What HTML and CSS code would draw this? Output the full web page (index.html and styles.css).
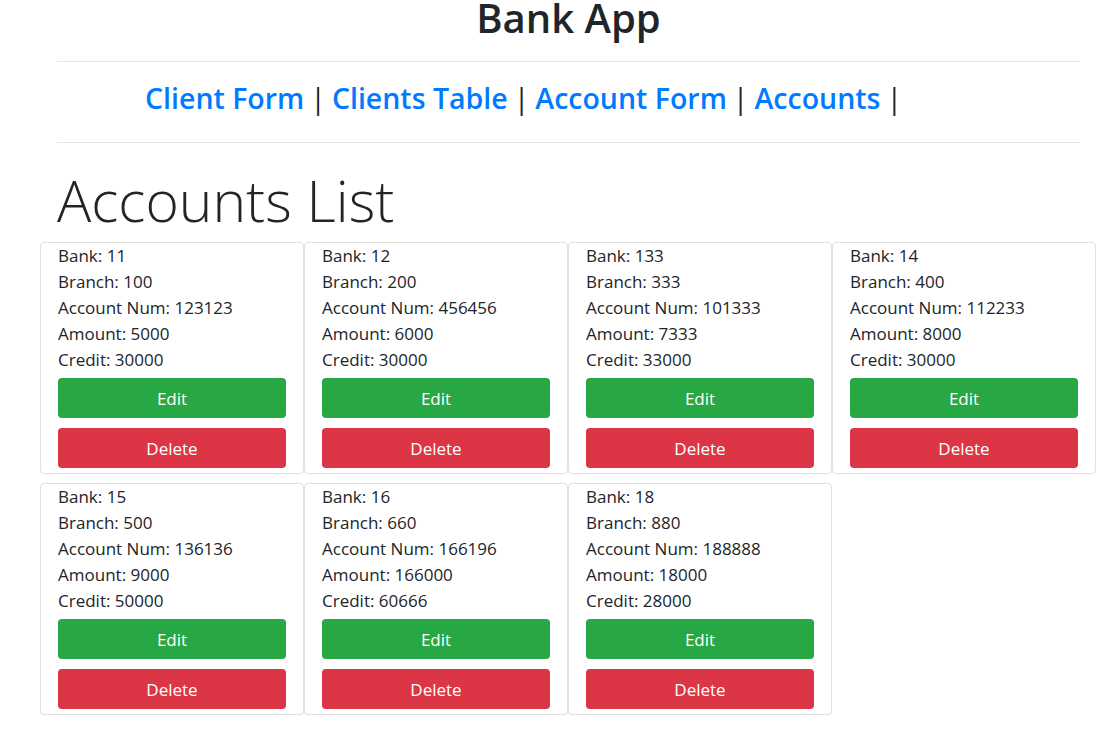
FILE: index.html
```html
<!DOCTYPE html>
<html lang="en">
<head>
<meta charset="utf-8">
<title>Bank App</title>
<link rel="stylesheet" href="styles.css">
</head>
<body>
<header class="header">
  <h1 class="app-title">Bank App</h1>
  <hr class="rule">
  <nav class="nav">
    <a class="nav-link" href="#">Client Form</a><span class="sep">|</span><a class="nav-link" href="#">Clients Table</a><span class="sep">|</span><a class="nav-link" href="#">Account Form</a><span class="sep">|</span><a class="nav-link" href="#">Accounts</a><span class="sep">|</span>
  </nav>
  <hr class="rule">
</header>
<main>
  <h2 class="page-title">Accounts List</h2>
  <div class="cards">
    <div class="card"><div class="line">Bank: 11</div><div class="line">Branch: 100</div><div class="line">Account Num: 123123</div><div class="line">Amount: 5000</div><div class="line">Credit: 30000</div><button class="btn btn-edit">Edit</button><button class="btn btn-delete">Delete</button></div>
    <div class="card"><div class="line">Bank: 12</div><div class="line">Branch: 200</div><div class="line">Account Num: 456456</div><div class="line">Amount: 6000</div><div class="line">Credit: 30000</div><button class="btn btn-edit">Edit</button><button class="btn btn-delete">Delete</button></div>
    <div class="card"><div class="line">Bank: 133</div><div class="line">Branch: 333</div><div class="line">Account Num: 101333</div><div class="line">Amount: 7333</div><div class="line">Credit: 33000</div><button class="btn btn-edit">Edit</button><button class="btn btn-delete">Delete</button></div>
    <div class="card"><div class="line">Bank: 14</div><div class="line">Branch: 400</div><div class="line">Account Num: 112233</div><div class="line">Amount: 8000</div><div class="line">Credit: 30000</div><button class="btn btn-edit">Edit</button><button class="btn btn-delete">Delete</button></div>
    <div class="card"><div class="line">Bank: 15</div><div class="line">Branch: 500</div><div class="line">Account Num: 136136</div><div class="line">Amount: 9000</div><div class="line">Credit: 50000</div><button class="btn btn-edit">Edit</button><button class="btn btn-delete">Delete</button></div>
    <div class="card"><div class="line">Bank: 16</div><div class="line">Branch: 660</div><div class="line">Account Num: 166196</div><div class="line">Amount: 166000</div><div class="line">Credit: 60666</div><button class="btn btn-edit">Edit</button><button class="btn btn-delete">Delete</button></div>
    <div class="card"><div class="line">Bank: 18</div><div class="line">Branch: 880</div><div class="line">Account Num: 188888</div><div class="line">Amount: 18000</div><div class="line">Credit: 28000</div><button class="btn btn-edit">Edit</button><button class="btn btn-delete">Delete</button></div>
  </div>
</main>
</body>
</html>
```
FILE: styles.css
```css
* { box-sizing: border-box; }
html, body {
  margin: 0;
  padding: 0;
  background: #fff;
  color: #212529;
  font-family: "Open Sans", "Noto Sans", sans-serif;
  font-size: 17px;
}
.header {
  display: flex;
  flex-direction: column;
  margin: 0 28px 0 57px;
}
.app-title {
  margin: 0;
  text-align: center;
  font-size: 40px;
  font-weight: 600;
  line-height: 36px;
  height: 36px;
}
.rule {
  margin: 0;
  border: 0;
  border-top: 1px solid rgba(0,0,0,.1);
  height: 0;
}
.app-title + .rule { margin-top: 25px; }
.nav {
  padding-left: 88px;
  padding-bottom: 8px;
  font-size: 28.5px;
  font-weight: 600;
  line-height: 72px;
  height: 80px;
}
.nav-link { color: #007bff; text-decoration: none; }
.sep { color: #212529; margin: 0 6px; font-weight: 400; }
.page-title {
  margin: 0 0 0 57px;
  padding-top: 18px;
  font-size: 57px;
  font-weight: 300;
  line-height: 79px;
  height: 99px;
}
.cards {
  display: flex;
  flex-wrap: wrap;
  row-gap: 9px;
  width: 1056px;
  margin-left: 40px;
}
.card {
  width: 264px;
  border: 1px solid rgba(0,0,0,.125);
  border-radius: 4px;
  padding: 0 17px;
  display: flex;
  flex-direction: column;
}
.line { line-height: 26px; }
.btn {
  font-family: inherit;
  font-size: 17px;
  color: #fff;
  border: 0;
  border-radius: 4px;
  height: 40px;
  margin: 5px 0;
  cursor: pointer;
}
.btn-edit { background: #28a745; }
.btn-delete { background: #dc3545; }
```
